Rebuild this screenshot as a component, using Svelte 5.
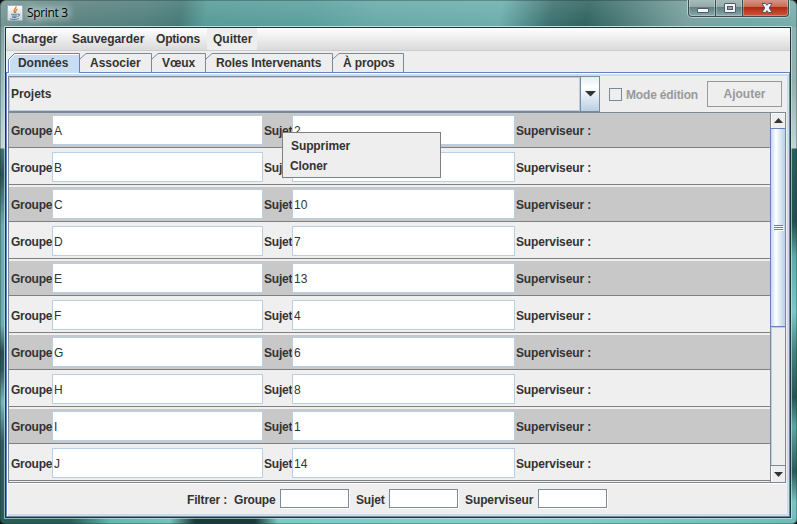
<script>
  const menus = [
    { label: 'Charger', w: 60, ls: -0.1 },
    { label: 'Sauvegarder', w: 84, ls: -0.04 },
    { label: 'Options', w: 51, ls: -0.2 },
    { label: 'Quitter', w: 50, ls: 0 , hot: true }
  ];
  const tabs = [
    { label: 'Données', w: 72, ls: -0.05, active: true },
    { label: 'Associer', w: 72, ls: 0 },
    { label: 'Vœux', w: 54, ls: -0.05 },
    { label: 'Roles Intervenants', w: 127, ls: -0.12 },
    { label: 'À propos', w: 71, ls: -0.15 }
  ];
  const rows = [
    ['A', '2'], ['B', ''], ['C', '10'], ['D', '7'], ['E', '13'],
    ['F', '4'], ['G', '6'], ['H', '8'], ['I', '1'], ['J', '14']
  ];
</script>

<div class="window">
  <header class="title">
    <svg class="java" width="16" height="16" viewBox="0 0 16 16">
      <defs>
        <linearGradient id="jbg" x1="0" y1="0" x2="0" y2="1">
          <stop offset="0" stop-color="#fdfdfd" /><stop offset="1" stop-color="#ccd4d8" />
        </linearGradient>
      </defs>
      <rect x="0.5" y="0.5" width="15" height="15" rx="1" fill="url(#jbg)" stroke="#a3b1b8" />
      <path d="M9 1.5C9.5 3.5 5.5 4.7 7.6 8M10.5 4C8 5.2 9.3 6 8.3 8" fill="none" stroke="#e8761e" stroke-width="1.3" />
      <path d="M4 9.2H10.5M4.7 11H10M5.3 12.4H9.4M10.7 9.2C13.3 8.8 12.8 11 10.5 11.5M3 13.7C5 14.7 10 14.7 12 13.4" fill="none" stroke="#5b82a3" stroke-width="1.1" />
    </svg>
    <span class="caption">Sprint 3</span>
    <div class="controls">
      <svg width="103" height="19" viewBox="0 0 103 19">
        <defs>
          <linearGradient id="btn" x1="0" y1="0" x2="0" y2="1">
            <stop offset="0" stop-color="#a9bebd" /><stop offset="0.47" stop-color="#91aaa9" />
            <stop offset="0.5" stop-color="#5f8180" /><stop offset="1" stop-color="#85aba9" />
          </linearGradient>
          <linearGradient id="cls" x1="0" y1="0" x2="0" y2="1">
            <stop offset="0" stop-color="#d99a8c" /><stop offset="0.47" stop-color="#c56a55" />
            <stop offset="0.5" stop-color="#ac2c11" /><stop offset="1" stop-color="#d0553a" />
          </linearGradient>
        </defs>
        <path d="M0.5 0V14Q0.5 18.5 5 18.5H98Q102.500 18.500 102.500 14V0" fill="#3b4c50" stroke="#b5d0ce" />
        <path d="M2 0H28V17H5Q2 17 2 14Z" fill="url(#btn)" />
        <path d="M29 0H55V17H29Z" fill="url(#btn)" />
        <path d="M56 0H101V14Q101 17 98 17H56Z" fill="url(#cls)" />
        <path d="M2.500 0V14Q2.500 16.500 5 16.500H27.500V0M29.500 0V16.500H54.500V0M56.500 0V16.500H98Q100.500 16.500 100.500 14V0" fill="none" stroke="#fff" stroke-opacity="0.28" />
        <rect x="10.500" y="9.500" width="11" height="4" rx="0.500" fill="#f6f6f6" stroke="#51566b" />
        <rect x="37.500" y="4.500" width="11" height="9" rx="0.500" fill="#f4f4f4" stroke="#51566b" />
        <rect x="40.500" y="7.500" width="5" height="3" fill="#8ca5a5" stroke="#51566b" />
        <path d="M75 4.500H78.500L80 6.300L81.500 4.500H85L82.200 9L85 13.500H81.500L80 11.700L78.500 13.500H75L77.800 9Z" fill="#f4f4f4" stroke="#51566b" />
      </svg>
    </div>
  </header>

  <main class="client">
    <nav class="menubar">
      {#each menus as m}
        <div class="menu" class:hot={m.hot} style="width:{m.w}px; letter-spacing:{m.ls}px">{m.label}</div>
      {/each}
    </nav>

    <div class="tabs">
      {#each tabs as t}
        <div class="tab" class:active={t.active} style="width:{t.w}px">
          <svg width={t.w} height="20">
            {#if t.active}
              <path d="M0.500 20V6.500L6.500 0.500H{t.w - 0.5}V20" fill="#c8ddf2" stroke="#6382bf" />
              <path d="M1.500 20V7L7 1.500H{t.w - 1}" fill="none" stroke="#fff" />
            {:else}
              <path d="M0 6L6 0.500H{t.w - 0.5}V20" fill="none" stroke="#7a8a99" />
            {/if}
          </svg>
          <span style="letter-spacing:{t.ls}px">{t.label}</span>
        </div>
      {/each}
    </div>

    <section class="pane">
      <div class="toolbar">
        <div class="combo">
          <div class="value">Projets</div>
          <div class="drop"><svg width="11" height="6"><path d="M0 0H11L5.500 5.500Z" fill="#333" /></svg></div>
        </div>
        <div class="box"></div>
        <span class="mode">Mode édition</span>
        <div class="add">Ajouter</div>
      </div>

      <div class="scroll">
        <div class="list">
          {#each rows as [groupe, sujet], i}
            <div class="row" class:dark={i % 2 === 0}>
              <span class="lg">Groupe</span>
              <div class="field g">{groupe}</div>
              <span class="ls">Sujet</span>
              <div class="field s">{sujet}</div>
              <span class="lv">Superviseur :</span>
            </div>
          {/each}
        </div>
        <div class="bar">
          <div class="arrow up"><svg width="9" height="5"><path d="M4.500 0L9 5H0Z" fill="#333" /></svg></div>
          <div class="thumb"><i></i><i></i><i></i></div>
          <div class="track"></div>
          <div class="arrow down"><svg width="9" height="5"><path d="M0 0H9L4.500 5Z" fill="#333" /></svg></div>
        </div>
      </div>

      <footer class="filter">
        <span class="f0">Filtrer :</span>
        <span class="f1">Groupe</span>
        <div class="input"></div>
        <span class="f2">Sujet</span>
        <div class="input"></div>
        <span class="f3">Superviseur</span>
        <div class="input"></div>
      </footer>
    </section>
  </main>

  <div class="popup">
    <div>Supprimer</div>
    <div class="second">Cloner</div>
  </div>
</div>

<style>
  :global(body) { margin: 0; background: #111; overflow: hidden; }
  .window, .window * { box-sizing: border-box; }
  .window {
    position: relative;
    width: 797px;
    height: 524px;
    padding: 0 6px 6px 5px;
    display: flex;
    flex-direction: column;
    overflow: hidden;
    border-radius: 6px 6px 5px 5px;
    font: bold 12px/14px "Liberation Sans", Arial, sans-serif;
    color: #333;
    white-space: nowrap;
    background:
      linear-gradient(90deg, #285c59 0, #285c59 70px, #4a8f8d 95px, #66b5b3 110px, #75c0be 170px, #183c3d 195px, #183c3d 255px, #7cc9c8 278px, #84cdcc 520px, #70bcba 100%) 0 518px / 797px 6px no-repeat,
      linear-gradient(180deg, #7e9f9e 0, #94b4b4 40px, #a7cbca 80px, #c8d8d6 121px, #3a7471 122px, #245451 148px, #68adab 198px, #6ab1af 298px, #23504f 325px, #2a5c5a 343px, #72bbb9 375px, #2a5e5c 415px, #285c59 100%) 0 27px / 6px 497px no-repeat,
      linear-gradient(180deg, #8bb4b2 0, #92b2b1 55px, #c3d6d4 121px, #27605c 122px, #22504f 195px, #5eaaa8 230px, #7cc8c7 285px, #438481 325px, #275553 370px, #5da6a4 400px, #2b5b58 445px, #78c5c3 475px, #72bdbb 100%) 790px 27px / 7px 497px no-repeat,
      linear-gradient(180deg, rgba(255, 255, 255, .12), rgba(255, 255, 255, 0) 26px),
      linear-gradient(100deg, #759795 0, #5b8280 75px, #517f7d 145px, #447a77 180px, #579b98 205px, #5aa09e 310px, #68aaa9 375px, #6caead 495px, #3c716f 545px, #306360 580px, #4c7c79 620px, #7aa19f 680px, #6ea9a7 740px, #8eb4b2 100%);
    box-shadow: inset 0 0 0 1px rgba(30, 55, 55, .35);
  }
  .title { height: 27px; display: flex; flex: none; padding: 5px 0 0 2px; border-bottom: 1px solid #b7d5d4; }
  .java { flex: none; }
  .caption {
    margin-left: 4px;
    font: 12px/16px "Open Sans", "Noto Sans", sans-serif;
    letter-spacing: -0.35px;
    color: #000;
    text-shadow: 0 0 7px #d8e6e6, 0 0 7px #d8e6e6, 0 0 11px #d8e6e6;
  }
  .controls { margin: -6px 1px 0 auto; height: 19px; }
  .controls svg { display: block; }
  .client {
    flex: none;
    width: 786px;
    height: 491px;
    border: 1px solid #203638;
    background: #eee;
    outline: 1px solid rgba(205, 230, 230, .65);
    display: flex;
    flex-direction: column;
  }
  .menubar { flex: none; height: 23px; border-bottom: 1px solid #ccc; display: flex; background: linear-gradient(#fff, #dadada); }
  .menu { height: 22px; padding: 4px 6px; }
  .hot { margin-left: 6px; background: #eee; }
  .tabs { flex: none; height: 21px; padding: 2px 0 0 2px; display: flex; }
  .tab { position: relative; height: 19px; padding: 3px 0 0 10px; }
  .tab svg { position: absolute; left: 0; top: 0; height: 19px; }
  .tab.active svg { height: 20px; z-index: 1; }
  .tab span { position: relative; z-index: 2; }
  .pane {
    flex: none;
    height: 445px;
    border-top: 1px solid #6382bf;
    border-left: 1px solid #6382bf;
    border-right: 1px solid #6382bf;
    border-bottom: 1px solid #7a8a99;
    box-shadow: inset 1px 1px #fff, inset -2px -2px #c8ddf2, inset 0 3px #c8ddf2;
    padding: 3px 3px 2px 1px;
    display: flex;
    flex-direction: column;
  }
  .toolbar { flex: none; height: 36px; display: flex; align-items: center; }
  .combo { width: 592px; height: 36px; border: 1px solid #7a8a99; display: flex; }
  .value { flex: 1; border: 1px solid #b8cfe5; padding: 9px 0 0 1px; letter-spacing: -0.05px; }
  .drop { width: 19px; border-left: 1px solid #7a8a99; background: linear-gradient(#e3edf6, #fff 30%, #b8cfe5); display: flex; align-items: center; justify-content: center; }
  .box { margin: 1px 0 0 9px; width: 13px; height: 13px; border: 1px solid #7a8a99; }
  .mode { margin-left: 4px; padding-top: 2px; width: 81px; color: #999; letter-spacing: -0.17px; }
  .add { width: 75px; height: 26px; border: 1px solid #999; color: #999; text-align: center; line-height: 25px; }
  .scroll { flex: none; height: 371px; border: 1px solid #7a8a99; border-right: 0; display: flex; box-shadow: 0 1px #fff; }
  .list { width: 761px; height: 369px; overflow: hidden; }
  .row { height: 37px; border-top: 2px solid #efefef; border-bottom: 1px solid #808080; background: #efefef; display: flex; align-items: center; padding-left: 2px; }
  .row:first-child { height: 35px; border-top: 0; }
  .row span { padding-top: 2px; }
  .dark { background: #c8c8c8; }
  .lg { width: 41px; letter-spacing: -0.25px; }
  .field { height: 30px; border: 1px solid #b8cfe5; background: #fff; padding: 8px 0 0 1px; font-weight: normal; }
  .g { width: 211px; }
  .ls { width: 29px; padding-left: 1px; letter-spacing: -0.2px; }
  .s { width: 223px; }
  .lv { padding-left: 1px; letter-spacing: -0.13px; }
  .bar { width: 16px; height: 369px; border-left: 1px solid #7a8a99; border-right: 1px solid #7a8a99; display: flex; flex-direction: column; }
  .arrow { flex: none; height: 15px; display: flex; align-items: center; justify-content: center; border: 1px solid #fff; border-width: 1px 0 0 1px; }
  .up { padding-bottom: 1px; }
  .down { border-top: 0; height: 16px; }
  .thumb {
    flex: none;
    height: 199px;
    margin: 0 -1px 0 -1px;
    border: 1px solid #6382bf;
    border-right-color: #7a8a99;
    background: linear-gradient(90deg, #c5d8ec, #fff 35%, #b8cfe5);
    display: flex;
    flex-direction: column;
    align-items: center;
    justify-content: center;
  }
  .thumb i { width: 9px; height: 1px; margin-bottom: 1px; background: #6382bf; box-shadow: 1px 1px #fff; }
  .track { flex: 1; border-bottom: 1px solid #7a8a99; box-shadow: inset 1px 1px #b8cfe5; }
  .filter { flex: none; height: 31px; padding: 6px 0 0 179px; display: flex; }
  .filter span { padding-top: 4px; }
  .f0 { width: 47px; letter-spacing: -0.15px; }
  .f1 { width: 46px; letter-spacing: -0.2px; }
  .f2 { width: 33px; margin-left: 7px; letter-spacing: -0.15px; }
  .f3 { width: 73px; margin-left: 7px; letter-spacing: -0.1px; }
  .input { width: 69px; height: 19px; border: 1px solid #7a8a99; background: #fff; box-shadow: 1px 1px #fff; }
  .popup {
    position: absolute;
    left: 282px;
    top: 132px;
    width: 159px;
    height: 46px;
    border: 1px solid #808080;
    background: #eee;
    padding: 6px 8px;
    line-height: 14px;
    letter-spacing: -0.1px;
  }
  .second { margin: 6px 0 0 -1px; }
</style>
